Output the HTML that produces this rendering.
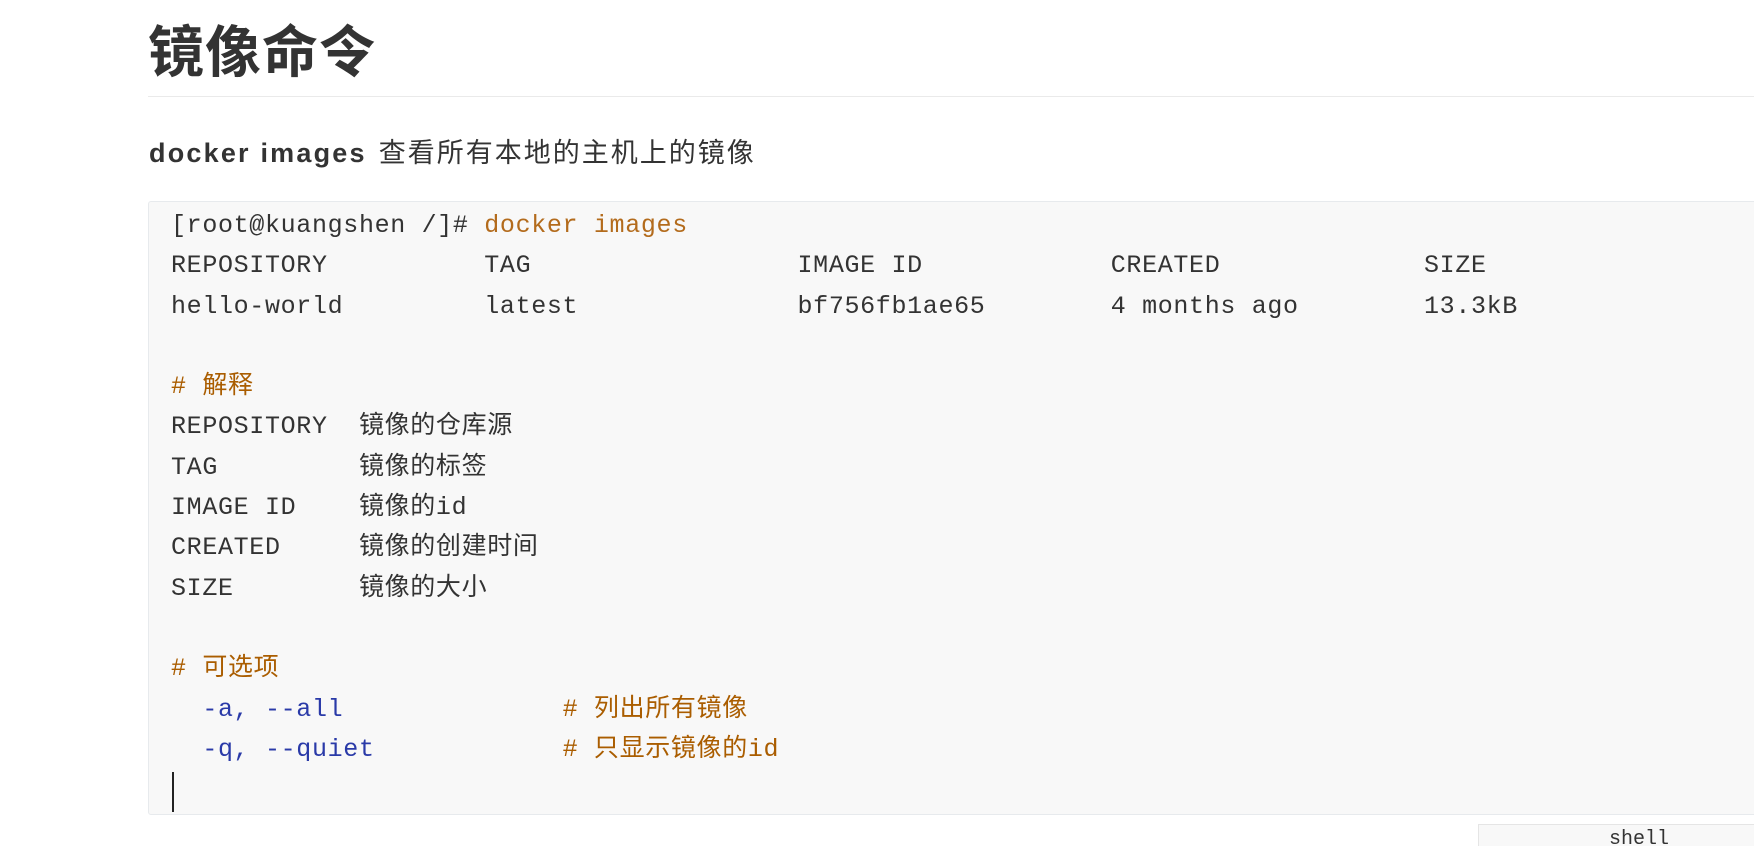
<!DOCTYPE html>
<html><head><meta charset="utf-8"><style>
html,body{margin:0;padding:0;background:#fff;width:1754px;height:846px;overflow:hidden;position:relative}
h1{position:absolute;left:148px;top:15px;margin:0;font:bold 56px/76px "Liberation Sans","Noto Sans CJK SC",sans-serif;color:#333;letter-spacing:1px}
.hr{position:absolute;left:148px;right:0;top:96px;height:1px;background:#eaeaea}
.p{position:absolute;left:149px;top:133px;font:27px/40px "Liberation Sans","Noto Sans CJK SC",sans-serif;color:#333;white-space:nowrap}
.p b{letter-spacing:2.2px}
.p span{letter-spacing:2px;margin-left:12px}
.code{position:absolute;left:148px;top:201px;right:-4px;height:612px;background:#f8f8f8;border:1px solid #e7eaed;border-radius:3px}
pre{margin:0;position:absolute;left:22px;top:4px;font:25px/40.3px "Liberation Mono","Noto Sans CJK SC",monospace;letter-spacing:0.66px;color:#333}
.o{color:#b36b1c}.c{color:#aa5d00}.b{color:#2a3aa8}
.cur{position:absolute;left:172px;top:772px;width:2px;height:40px;background:#222}
.lab{position:absolute;left:1478px;top:824px;width:290px;height:30px;background:#f8f8f8;border:1px solid #e5e5e5;font:20px/30px "Liberation Mono",monospace;color:#333;text-indent:130px}
</style></head><body>
<h1>镜像命令</h1>
<div class="hr"></div>
<div class="p"><b>docker images</b><span>查看所有本地的主机上的镜像</span></div>
<div class="code"><pre>[root@kuangshen /]# <span class="o">docker images</span>
REPOSITORY          TAG                 IMAGE ID            CREATED             SIZE
hello-world         latest              bf756fb1ae65        4 months ago        13.3kB

<span class="c"># 解释</span>
REPOSITORY  镜像的仓库源
TAG         镜像的标签
IMAGE ID    镜像的id
CREATED     镜像的创建时间
SIZE        镜像的大小

<span class="c"># 可选项</span>
  <span class="b">-a, --all</span>              <span class="c"># 列出所有镜像</span>
  <span class="b">-q, --quiet</span>            <span class="c"># 只显示镜像的id</span>
</pre></div>
<div class="cur"></div>
<div class="lab">shell</div>
</body></html>
